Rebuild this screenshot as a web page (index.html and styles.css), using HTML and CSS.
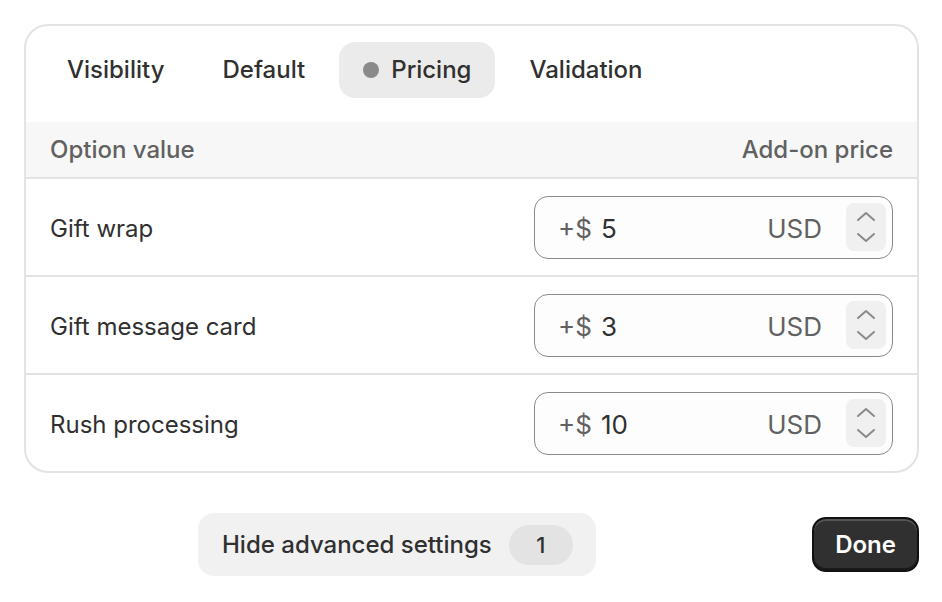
FILE: index.html
```html
<!DOCTYPE html>
<html lang="en">

<head>
  <meta charset="UTF-8">
  <meta name="viewport" content="width=device-width, initial-scale=1.0">
  <title>Option pricing</title>
  <link rel="stylesheet" href="styles.css">
</head>

<body>
  <div class="settings-card">
    <div class="tabs">
      <button class="tab">Visibility</button>
      <button class="tab">Default</button>
      <button class="tab active"><span class="tab-dot"></span>Pricing</button>
      <button class="tab">Validation</button>
    </div>

    <div class="price-table">
      <div class="table-head">
        <span>Option value</span>
        <span>Add-on price</span>
      </div>

      <div class="price-row">
        <span class="row-label">Gift wrap</span>
        <div class="price-input">
          <span class="prefix">+$</span>
          <span class="amount">5</span>
          <span class="currency">USD</span>
          <div class="stepper">
            <svg viewBox="0 0 24 12" width="24" height="12"><path d="M4 10 L12 3 L20 10" /></svg>
            <svg viewBox="0 0 24 12" width="24" height="12"><path d="M4 2 L12 9 L20 2" /></svg>
          </div>
        </div>
      </div>

      <div class="price-row">
        <span class="row-label">Gift message card</span>
        <div class="price-input">
          <span class="prefix">+$</span>
          <span class="amount">3</span>
          <span class="currency">USD</span>
          <div class="stepper">
            <svg viewBox="0 0 24 12" width="24" height="12"><path d="M4 10 L12 3 L20 10" /></svg>
            <svg viewBox="0 0 24 12" width="24" height="12"><path d="M4 2 L12 9 L20 2" /></svg>
          </div>
        </div>
      </div>

      <div class="price-row">
        <span class="row-label">Rush processing</span>
        <div class="price-input">
          <span class="prefix">+$</span>
          <span class="amount">10</span>
          <span class="currency">USD</span>
          <div class="stepper">
            <svg viewBox="0 0 24 12" width="24" height="12"><path d="M4 10 L12 3 L20 10" /></svg>
            <svg viewBox="0 0 24 12" width="24" height="12"><path d="M4 2 L12 9 L20 2" /></svg>
          </div>
        </div>
      </div>
    </div>
  </div>

  <div class="footer">
    <button class="toggle-advanced">Hide advanced settings <span class="count">1</span></button>
    <button class="done-btn">Done</button>
  </div>
</body>

</html>
```

FILE: styles.css
```css
body {
  margin: 0;
  padding: 24px 23px 0 24px;
  font-family: 'Inter', 'Liberation Sans', sans-serif;
  background: #fff;
  color: #303030;
}

button {
  font-family: inherit;
  cursor: pointer;
}

.settings-card {
  border: 2px solid #e3e3e3;
  border-radius: 24px;
  background: #fff;
  overflow: hidden;
}

.tabs {
  display: flex;
  gap: 10px;
  padding: 16px 16px 24px 17px;
}

.tab {
  display: flex;
  align-items: center;
  gap: 12px;
  height: 56px;
  padding: 0 24px 2px;
  border: none;
  border-radius: 16px;
  background: transparent;
  font-size: 24px;
  font-weight: 500;
  color: #303030;
}

.tab.active {
  background: #ebebeb;
}

.tab-dot {
  width: 16px;
  height: 16px;
  margin-top: 2px;
  border-radius: 50%;
  background: #8a8a8a;
}

.table-head {
  display: flex;
  justify-content: space-between;
  align-items: center;
  height: 55px;
  padding: 0 24px;
  background: #f7f7f7;
  border-bottom: 2px solid #e3e3e3;
  font-size: 24px;
  font-weight: 500;
  color: #616161;
}

.price-row {
  display: flex;
  justify-content: space-between;
  align-items: center;
  height: 96px;
  padding: 0 24px;
}

.price-row + .price-row {
  border-top: 2px solid #e3e3e3;
}

.row-label {
  font-size: 24px;
  padding-top: 2px;
}

.price-input {
  display: flex;
  align-items: center;
  box-sizing: border-box;
  width: 359px;
  height: 63px;
  padding: 2px 6px 0 23px;
  border: 1.5px solid #8a8a8a;
  border-radius: 14px;
  background: #fdfdfd;
  font-size: 26px;
}

.prefix {
  color: #616161;
  margin-right: 9px;
}

.amount {
  flex: 1;
  color: #303030;
}

.currency {
  color: #616161;
  margin-right: 24px;
}

.stepper {
  display: flex;
  flex-direction: column;
  align-items: center;
  justify-content: center;
  gap: 10px;
  width: 40px;
  height: 48px;
  margin-top: -2px;
  border-radius: 8px;
  background: #f0f0f0;
}

.stepper path {
  fill: none;
  stroke: #8a8a8a;
  stroke-width: 2;
  stroke-linecap: round;
  stroke-linejoin: round;
}

.footer {
  display: flex;
  align-items: center;
  justify-content: space-between;
  padding: 40px 0 0 174px;
}

.toggle-advanced {
  display: flex;
  align-items: center;
  gap: 17px;
  height: 63px;
  padding: 0 23px 0 24px;
  border: none;
  border-radius: 16px;
  background: #f1f1f1;
  font-size: 24px;
  font-weight: 500;
  color: #303030;
}

.count {
  display: flex;
  align-items: center;
  justify-content: center;
  width: 64px;
  height: 40px;
  border-radius: 20px;
  background: #e3e3e3;
  font-size: 22px;
}

.done-btn {
  height: 55px;
  padding: 0 21px;
  border: 2px solid #111;
  border-radius: 14px;
  background: #303030;
  box-shadow: inset 0 2px 0 rgba(255, 255, 255, 0.18), inset 0 -2px 0 #1a1a1a;
  color: #fff;
  font-size: 24px;
  font-weight: 600;
}
```
